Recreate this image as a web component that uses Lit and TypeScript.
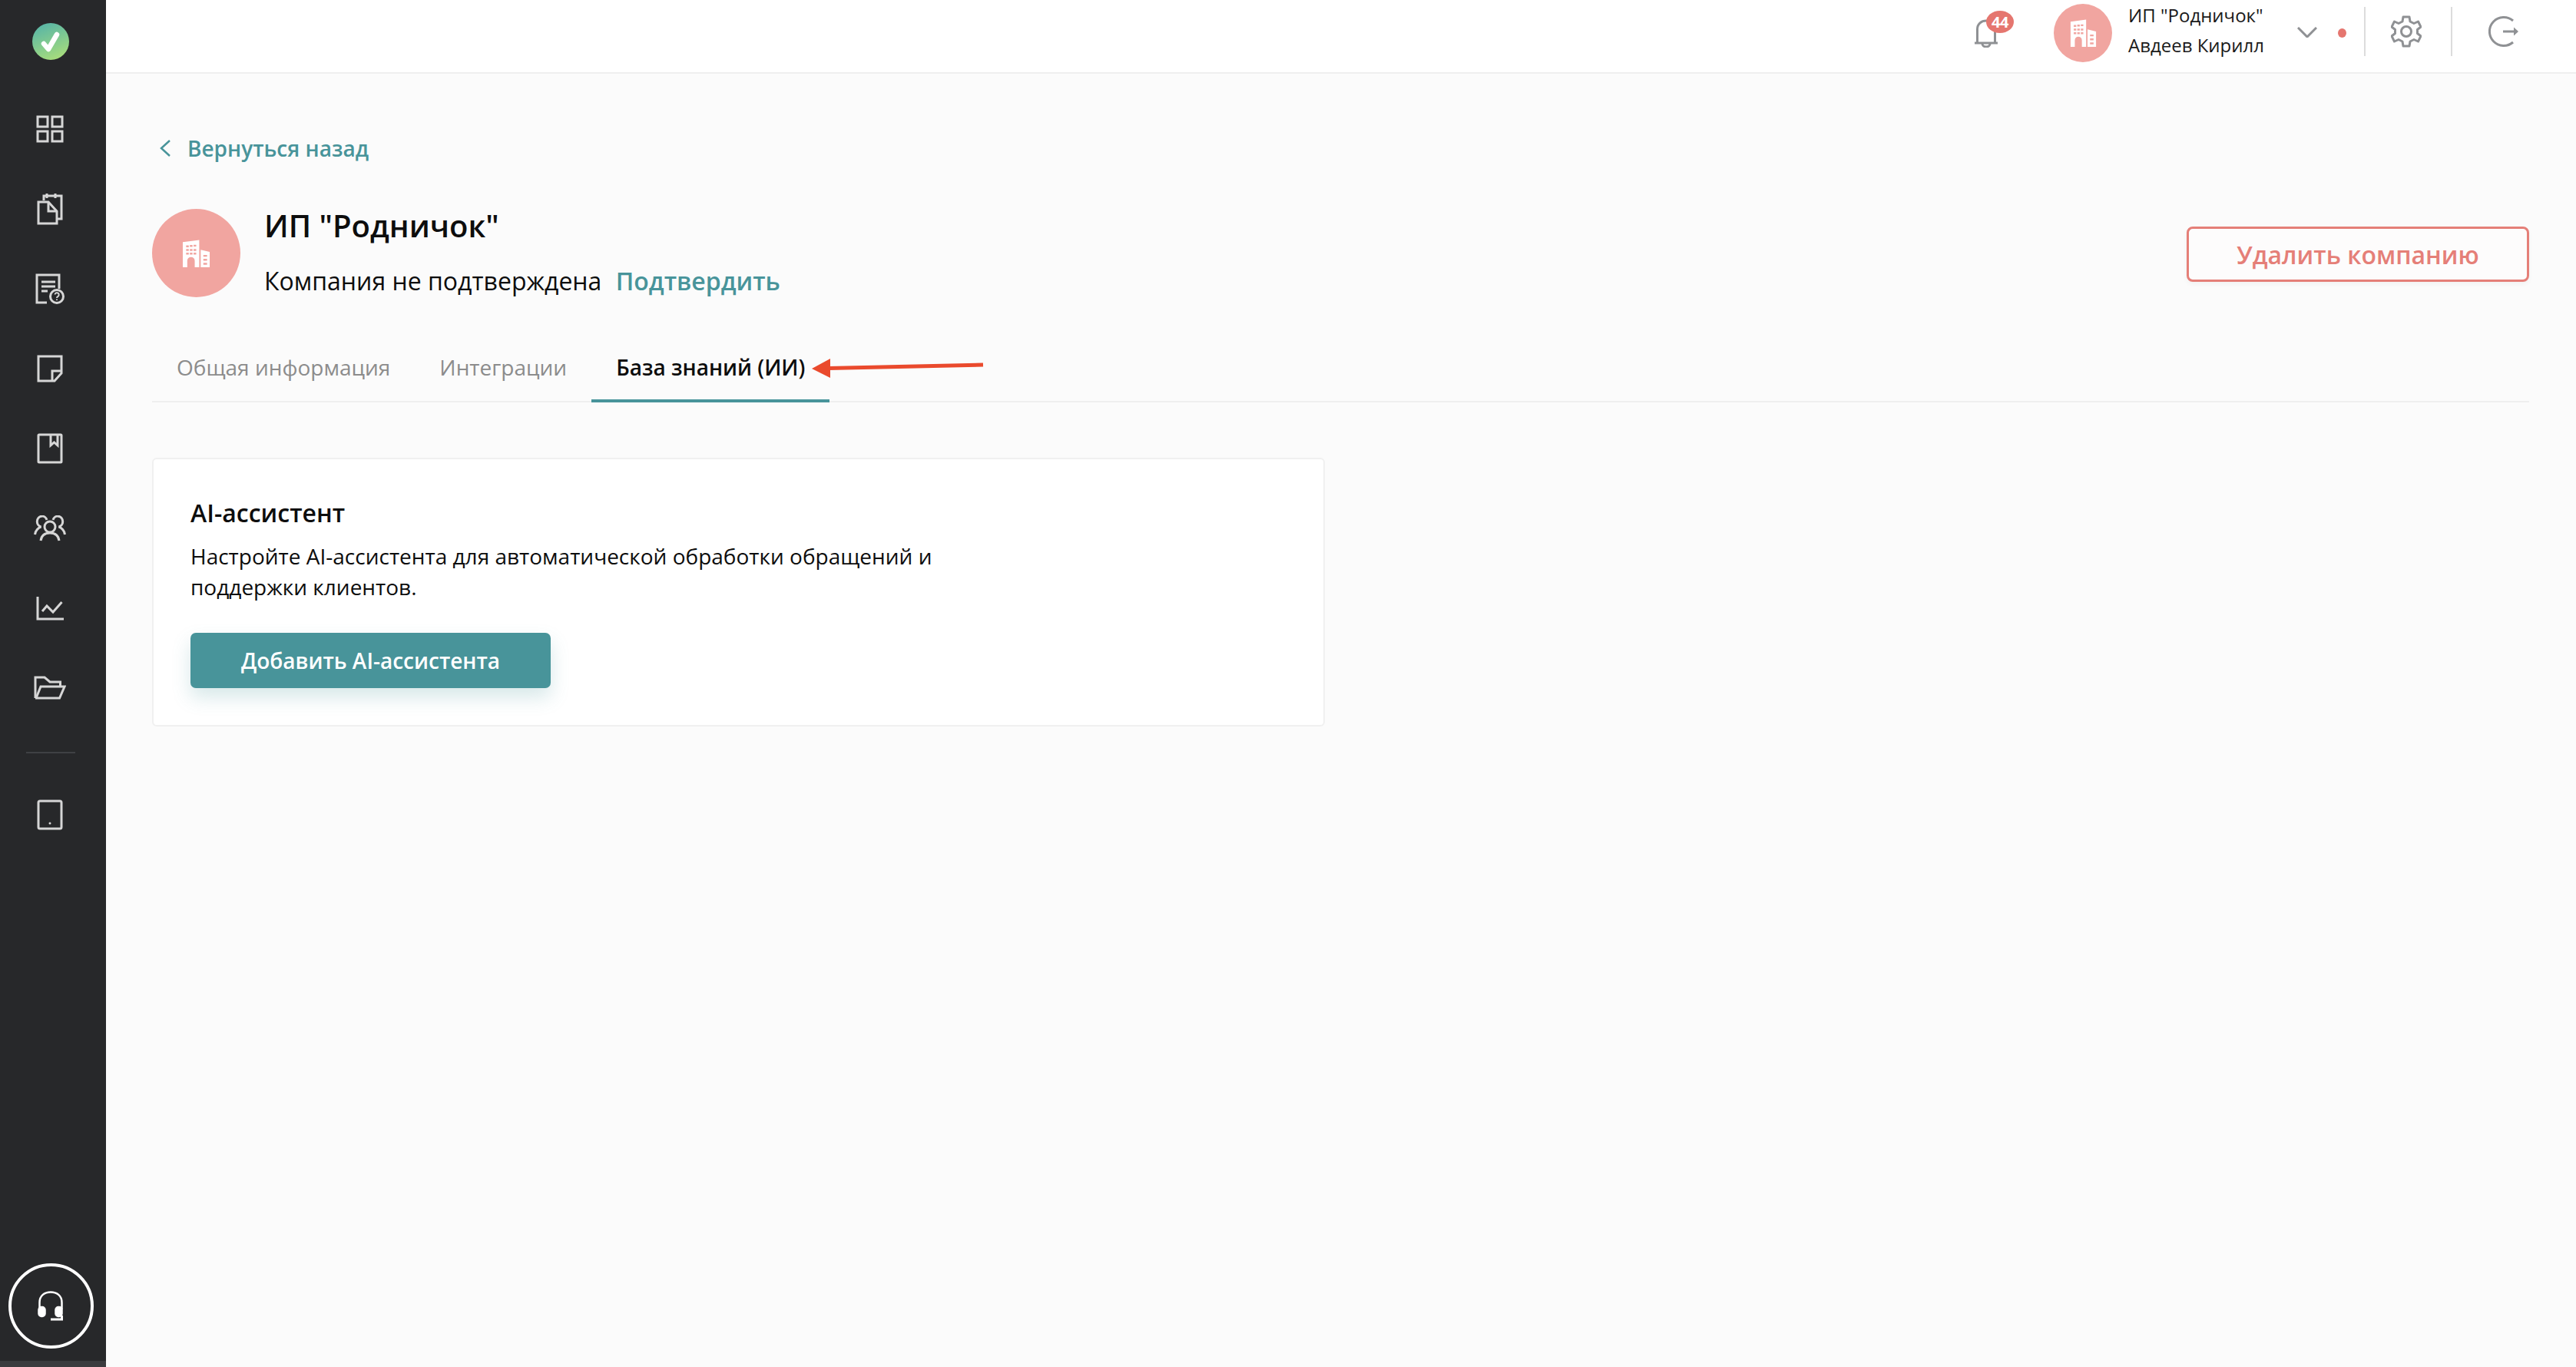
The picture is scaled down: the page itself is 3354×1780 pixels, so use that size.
import { LitElement, html, css } from "lit";
import { customElement } from "lit/decorators.js";

const building = (w: number, h: number) => html`<svg width=${w} height=${h} viewBox="0 0 38 38" fill="#fff" preserveAspectRatio="none">
  <path fill-rule="evenodd" d="M1 3.500 L23 0.500 V38 H17 V29 a5 5 0 0 0 -10 0 V38 H1 Z M5.500 8h3.500v2.500H5.500z M10.500 7.500h3.500v2.500h-3.500z M15.500 7h3.500v2.500h-3.500z M5.500 13h3.500v2.500H5.500z M10.500 13h3.500v2.500h-3.500z M15.500 13h3.500v2.500h-3.500z M5.500 18h3.500v2.500H5.500z M10.500 18h3.500v2.500h-3.500z M15.500 18h3.500v2.500h-3.500z"/>
  <path fill-rule="evenodd" d="M25 14 L37 17 V38 H25 Z M28.500 21h5v2.500h-5z M28.500 26.500h5v2.500h-5z M28.500 32h5v2.500h-5z"/>
</svg>`;

const navIcons = [
  html`<svg width="36" height="36" viewBox="0 0 36 36"><rect x="2" y="2" width="13" height="13"/><rect x="21" y="2" width="13" height="13"/><rect x="2" y="21" width="13" height="13"/><rect x="21" y="21" width="13" height="13"/></svg>`,
  html`<svg width="34" height="42" viewBox="0 0 34 42"><path d="M9 10V4H32V34H26"/><path d="M13 1V7M24 1V7"/><path d="M2 12H15L26 24V40H2Z"/><path d="M15 12V24H26"/></svg>`,
  html`<svg width="38" height="40" viewBox="0 0 38 40"><path d="M15 38H2V2H31V20"/><path d="M8 11H26M8 17H26M8 23H16"/><circle cx="28" cy="30" r="8.500"/><path d="M25.500 27.500a2.600 2.600 0 1 1 3.800 2.600c-1 .6-1.300 1-1.300 2" stroke-width="2"/><path d="M28 33.500v1.500" stroke-width="2"/></svg>`,
  html`<svg width="34" height="36" viewBox="0 0 34 36"><path d="M23 34H2V2H32V24Z"/><path d="M20 33V21H32"/></svg>`,
  html`<svg width="34" height="40" viewBox="0 0 34 40"><rect x="2" y="2" width="30" height="36" rx="1"/><path d="M18 2V16L22.500 12L27 16V2"/></svg>`,
  html`<svg width="42" height="34" viewBox="0 0 42 34"><circle cx="21" cy="15" r="7"/><path d="M9 33C10 26 15 23 21 23S32 26 33 33"/><path d="M17 6A6.500 7 0 1 0 9.500 15C6 16 2 20 1.500 25"/><path d="M25 6A6.500 7 0 1 1 32.500 15C36 16 40 20 40.500 25"/></svg>`,
  html`<svg width="36" height="32" viewBox="0 0 36 32"><path d="M2 1V30H36"/><path d="M8 20L14 13L22 21L33.500 8"/></svg>`,
  html`<svg width="42" height="32" viewBox="0 0 42 32"><path d="M2 29V2H14L21 8H34.500V14"/><path d="M2 29H33.500L40 14H9L3 29"/></svg>`,
];

@customElement("app-root")
export class AppRoot extends LitElement {
  static styles = css`
    :host { display: block; width: 3354px; height: 1780px; background: #fbfbfb; font-family: "Open Sans", "Noto Sans", sans-serif; color: #0d0d0d; overflow: hidden; }
    .shell { display: flex; height: 1780px; }
    .side { width: 138px; flex: none; background: #27282a; display: flex; flex-direction: column; align-items: center; }
    .logo { width: 48px; height: 48px; margin: 30px 6px 38px 0; flex: none; }
    .item { height: 104px; width: 100%; display: flex; align-items: center; justify-content: center; flex: none; padding-right: 8px; box-sizing: border-box; }
    .item svg { fill: none; stroke: #d6d6d6; stroke-width: 3; }
    .rule { width: 64px; height: 2px; background: #3f4144; margin: 31px 6px 28px 0; flex: none; }
    .support { margin: auto 6px 16px 0; width: 111px; height: 111px; border: 4px solid #fff; border-radius: 50%; box-sizing: border-box; display: flex; align-items: center; justify-content: center; flex: none; }
    .strip { height: 8px; width: 100%; background: #3a3b3e; flex: none; }
    .main { flex: 1; min-width: 0; display: flex; flex-direction: column; }
    .top { height: 86px; padding-bottom: 8px; background: #fff; border-bottom: 2px solid #efefef; display: flex; align-items: center; padding-right: 74px; justify-content: flex-end; flex: none; }
    .bell { position: relative; width: 30px; height: 38px; margin-right: 73px; margin-top: 0; }
    .bell svg { fill: none; stroke: #8f9194; stroke-width: 3; display: block; }
    .badge { position: absolute; left: 15px; top: -10px; width: 36px; height: 29px; border-radius: 50%; background: #e5766f; color: #fff; font-size: 20px; font-weight: 700; line-height: 29px; text-align: center; letter-spacing: -0.5px; }
    .ava-s { width: 76px; height: 76px; border-radius: 50%; background: #f1a5a0; display: flex; align-items: center; justify-content: center; margin-right: 21px; flex: none; }
    .who { font-size: 24px; line-height: 39px; width: 220px; color: #1a1a1a; white-space: nowrap; margin-top: -8px; }
    .chev { margin-right: 27px; margin-top: -2px; }
    .dot { width: 11px; height: 12px; border-radius: 50%; background: #e5766f; margin-right: 23px; }
    .sep { width: 2px; height: 64px; background: #dcdcdc; margin-top: -4px; }
    .gear { margin: -4px 38px 0 33px; }
    .gear, .out, .chev { flex: none; fill: none; stroke: #8f9194; stroke-width: 3; }
    .out { margin: -4px 0 0 47px; }
    .content { padding: 0 61px 0 60px; flex: 1; display: flex; flex-direction: column; }
    .back { display: flex; align-items: center; gap: 20px; margin-top: 78px; height: 38px; font-size: 28px; font-weight: 600; color: #48949a; padding-left: 8px; }
    .back svg { fill: none; stroke: #48949a; stroke-width: 2.500; }
    .head { display: flex; align-items: center; margin-top: 59px; }
    .ava-l { width: 115px; height: 115px; border-radius: 50%; background: #f1a5a0; display: flex; align-items: center; justify-content: center; margin-right: 31px; flex: none; }
    .names { flex: 1; margin-top: -3px; }
    .title { font-size: 40px; font-weight: 600; line-height: 52px; color: #0d0d0d; }
    .sub { font-size: 32px; line-height: 44px; margin-top: 24px; color: #0d0d0d; }
    .sub a { color: #48949a; font-weight: 600; margin-left: 10px; }
    .del { width: 446px; height: 72px; box-sizing: border-box; border: 3px solid #e57f78; border-radius: 8px; color: #e57f78; font-size: 32px; font-weight: 600; display: flex; align-items: center; justify-content: center; background: #fdfcfc; box-shadow: 0 3px 6px rgba(0,0,0,.04); margin-top: 3px; }
    .tabs { display: flex; margin-top: 53px; border-bottom: 2px solid #efefef; height: 81px; position: relative; }
    .tab { padding: 0 32px; font-size: 28px; line-height: 74px; color: #8c8c8c; height: 83px; box-sizing: border-box; }
    .tab.on { color: #0d0d0d; font-weight: 600; border-bottom: 4px solid #48949a; }
    .arrow { position: absolute; left: 857px; top: 23px; }
    .card { margin-top: 72px; width: 1527px; box-sizing: border-box; height: 350px; background: #fff; border: 2px solid #f0f0f0; border-radius: 6px; padding: 48px 48px 0; }
    .card h2 { margin: 0; font-size: 32px; font-weight: 600; line-height: 44px; }
    .card p { margin: 14px 0 0; font-size: 28px; line-height: 40px; width: 1000px; color: #0d0d0d; }
    .add { margin-top: 40px; width: 469px; height: 72px; border-radius: 7px; background: #48949a; color: #fff; font-size: 28px; font-weight: 600; display: flex; align-items: center; justify-content: center; box-shadow: 0 12px 24px rgba(72,148,154,.22); }
  `;

  render() {
    return html`<div class="shell">
      <nav class="side">
        <svg class="logo" viewBox="0 0 48 48">
          <defs><linearGradient id="lg" x1="0.3" y1="0" x2="0.7" y2="1"><stop offset="0" stop-color="#58b5a6"/><stop offset="1" stop-color="#a9de7b"/></linearGradient></defs>
          <circle cx="24" cy="24" r="24" fill="url(#lg)"/>
          <path d="M15 27L21 34L32 15" fill="none" stroke="#fff" stroke-width="6.500" stroke-linecap="round" stroke-linejoin="round"/>
        </svg>
        ${navIcons.map((i) => html`<div class="item">${i}</div>`)}
        <div class="rule"></div>
        <div class="item"><svg width="34" height="40" viewBox="0 0 34 40"><rect x="2" y="2" width="30" height="36" rx="2"/><circle cx="17" cy="31" r="1.500" fill="#d6d6d6" stroke="none"/></svg></div>
        <div class="support">
          <svg width="34" height="40" viewBox="0 0 34 40" fill="none" stroke="#fff" stroke-width="2.500">
            <path d="M2.500 24V15C2.500 6 9 1.500 17 1.500S31.500 6 31.500 15V24"/>
            <rect x="1.500" y="21" width="8" height="12" rx="3.500" fill="#fff"/>
            <rect x="23.500" y="21" width="8" height="12" rx="3.500" fill="#fff"/>
            <path d="M31.500 32V37H17" stroke-width="3"/>
          </svg>
        </div>
        <div class="strip"></div>
      </nav>
      <div class="main">
        <header class="top">
          <div class="bell">
            <svg width="30" height="38" viewBox="0 0 30 38"><path d="M3.500 32V14C3.500 7 9 3 15 3S26.500 7 26.500 14V32"/><path d="M0 32H30"/><path d="M10 33a5 4 0 0 0 10 0"/></svg>
            <span class="badge">44</span>
          </div>
          <div class="ava-s">${building(35, 36)}</div>
          <div class="who">ИП "Родничок"<br />Авдеев Кирилл</div>
          <svg class="chev" width="26" height="14" viewBox="0 0 26 14"><path d="M1 1L13 13L25 1"/></svg>
          <div class="dot"></div>
          <div class="sep"></div>
          <svg class="gear" width="40" height="42" viewBox="0 0 40 42"><circle cx="20" cy="21" r="6.500"/><path d="M16 2H24L25 8L30 10.500L35.500 8L39 15L34.500 18.500V23.500L39 27L35.500 34L30 31.500L25 34L24 40H16L15 34L10 31.500L4.500 34L1 27L5.500 23.500V18.500L1 15L4.500 8L10 10.500L15 8Z" stroke-linejoin="round"/></svg>
          <div class="sep"></div>
          <svg class="out" width="40" height="42" viewBox="0 0 40 42"><path d="M32 7A18.500 18.500 0 1 0 32 35"/><path d="M19 21H34"/><path d="M33 15.500L39 21L33 26.500Z" fill="#8f9194" stroke="none"/></svg>
        </header>
        <main class="content">
          <div class="back"><svg width="18" height="24" viewBox="0 0 18 24"><path d="M15 2L4 12L15 22"/></svg><span>Вернуться назад</span></div>
          <section class="head">
            <div class="ava-l">${building(37, 36)}</div>
            <div class="names">
              <div class="title">ИП "Родничок"</div>
              <div class="sub">Компания не подтверждена <a>Подтвердить</a></div>
            </div>
            <div class="del">Удалить компанию</div>
          </section>
          <div class="tabs">
            <div class="tab">Общая информация</div>
            <div class="tab">Интеграции</div>
            <div class="tab on">База знаний (ИИ)</div>
            <svg class="arrow" width="226" height="30" viewBox="0 0 226 30"><path d="M225 11L24 15.500" stroke="#ea4a2d" stroke-width="5" fill="none"/><path d="M2 16L26 3V28Z" fill="#ea4a2d"/></svg>
          </div>
          <section class="card">
            <h2>AI-ассистент</h2>
            <p>Настройте AI-ассистента для автоматической обработки обращений и поддержки клиентов.</p>
            <div class="add">Добавить AI-ассистента</div>
          </section>
        </main>
      </div>
    </div>`;
  }
}
